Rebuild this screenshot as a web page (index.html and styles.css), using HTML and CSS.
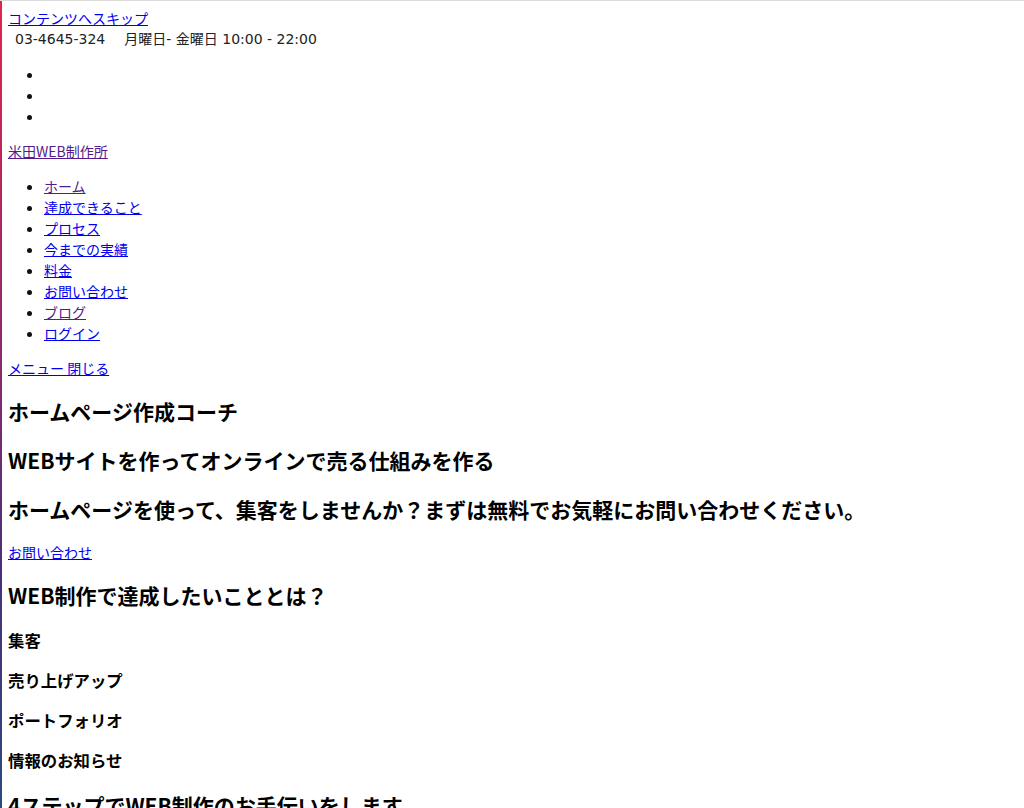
FILE: index.html
```html
<!DOCTYPE html>
<html lang="ja">
<head>
<meta charset="utf-8">
<title>米田WEB制作所</title>
<link rel="stylesheet" href="styles.css">
</head>
<body>
<div class="edge-left"></div>
<div class="edge-top"></div>
<a class="skip" href="#content">コンテンツへスキップ</a>
<div class="info"><span class="tel">03-4645-324</span><span class="hours">月曜日- 金曜日 10:00 - 22:00</span></div>
<ul class="sns">
  <li></li>
  <li></li>
  <li></li>
</ul>
<p class="logo"><a class="visited" href="#">米田WEB制作所</a></p>
<ul class="nav">
  <li><a class="visited" href="#">ホーム</a></li>
  <li><a href="#">達成できること</a></li>
  <li><a href="#">プロセス</a></li>
  <li><a href="#">今までの実績</a></li>
  <li><a href="#">料金</a></li>
  <li><a href="#">お問い合わせ</a></li>
  <li><a class="visited" href="#">ブログ</a></li>
  <li><a href="#">ログイン</a></li>
</ul>
<p class="menu"><a href="#">メニュー 閉じる</a></p>
<main id="content">
  <h2>ホームページ作成コーチ</h2>
  <h2>WEBサイトを作ってオンラインで売る仕組みを作る</h2>
  <h2>ホームページを使って、集客をしませんか？まずは無料でお気軽にお問い合わせください。</h2>
  <p><a href="#">お問い合わせ</a></p>
  <h2>WEB制作で達成したいこととは？</h2>
  <h3>集客</h3>
  <h3>売り上げアップ</h3>
  <h3>ポートフォリオ</h3>
  <h3>情報のお知らせ</h3>
  <h2>4ステップでWEB制作のお手伝いをします</h2>
</main>
</body>
</html>
```
FILE: styles.css
```css
html {
  background: #fff;
}
body {
  margin: 8px;
  font-family: "Noto Sans CJK JP", "Noto Sans", sans-serif;
  font-size: 14px;
  line-height: 1.5;
  color: #111;
}
a {
  color: #0000ee;
}
a.visited {
  color: #551a8b;
}
.edge-left {
  position: fixed;
  left: 0;
  top: 0;
  bottom: 0;
  width: 2px;
  background: linear-gradient(to bottom, #e3244c 0%, #8a2a6e 45%, #4a2f7a 70%, #2a4a7e 100%);
}
.edge-top {
  position: fixed;
  left: 0;
  right: 0;
  top: 0;
  height: 1px;
  background: #dcdcdc;
}
.skip {
  display: block;
  width: max-content;
}
.info {
  padding-left: 7px;
  font-family: "DejaVu Sans", "Noto Sans CJK JP", sans-serif;
  color: #222;
}
.hours {
  margin-left: 19px;
}
ul {
  margin: 14px 0;
  padding-left: 36px;
}
p {
  margin: 14px 0;
}
h2 {
  font-size: 21px;
  font-weight: bold;
  margin: 17.2px 0;
  color: #000;
}
h3 {
  font-size: 16.4px;
  font-weight: bold;
  margin: 16.2px 0;
  line-height: 1.45;
  color: #000;
}
```
